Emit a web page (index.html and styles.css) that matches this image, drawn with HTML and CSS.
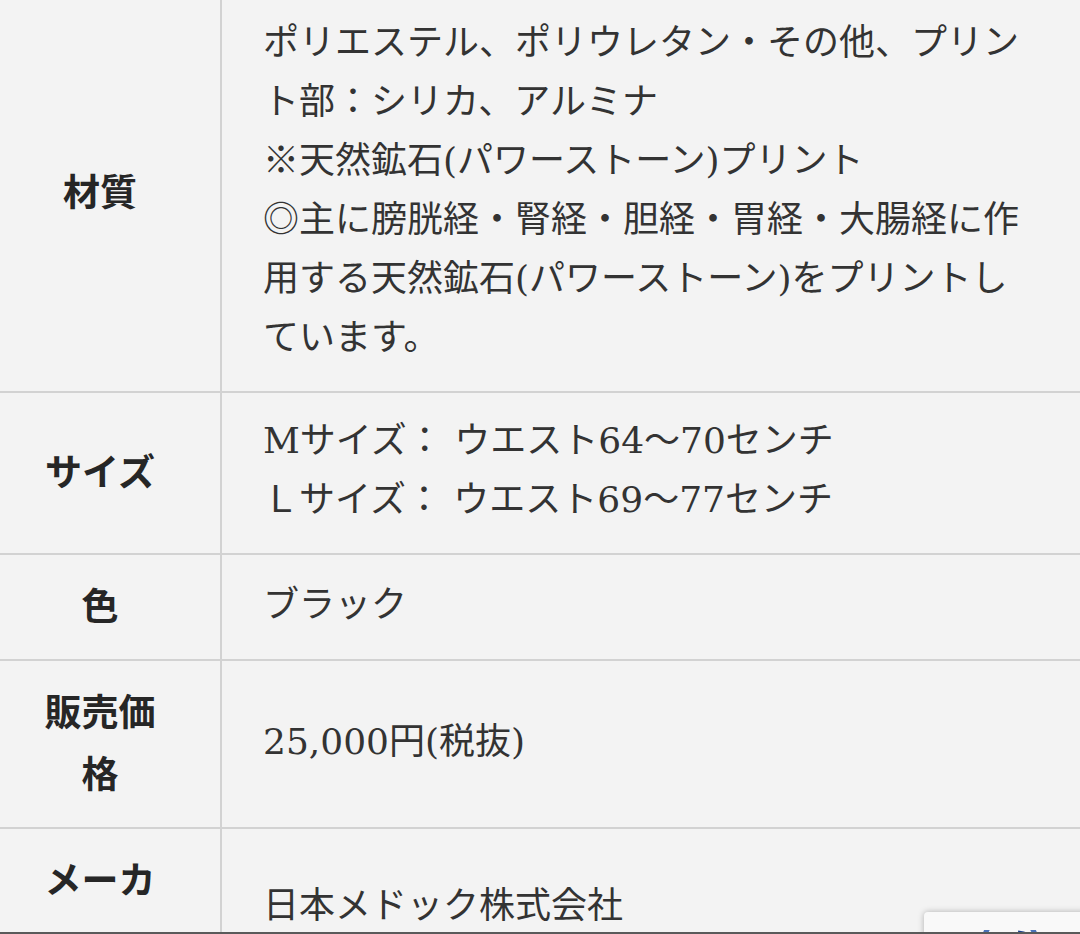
FILE: index.html
```html
<!DOCTYPE html>
<html lang="ja">
<head>
<meta charset="utf-8">
<title>商品仕様</title>
<link rel="stylesheet" href="styles.css">
</head>
<body>
<div class="spec">
  <div class="label">材質</div>
  <div class="value"><p class="text">ポリエステル、ポリウレタン・その他、プリント部：シリカ、アルミナ<br><span class="cjk">※</span>天然鉱石(パワーストーン)プリント<br><span class="cjk">◎</span>主に膀胱経・腎経・胆経・胃経・大腸経に作用する天然鉱石(パワーストーン)をプリントしています。</p></div>

  <div class="label">サイズ</div>
  <div class="value"><p class="text">Mサイズ： ウエスト64～70センチ<br>Ｌサイズ： ウエスト69～77センチ</p></div>

  <div class="label">色</div>
  <div class="value"><p class="text">ブラック</p></div>

  <div class="label">販売価格</div>
  <div class="value"><p class="text">25,000円(税抜)</p></div>

  <div class="label label-top">メーカ</div>
  <div class="value value-low"><p class="text">日本メドック株式会社</p></div>
</div>

<div class="badge">
  <svg class="badge-logo" width="56" height="12" viewBox="0 0 56 12">
    <path d="M2 12 A26 26 0 0 1 54 12" fill="none" stroke="#4a72b8" stroke-width="5"/>
    <path d="M36 3 A26 26 0 0 1 54 12" fill="none" stroke="#1c3f8c" stroke-width="5"/>
  </svg>
</div>
<div class="edge"></div>
</body>
</html>
```
FILE: styles.css
```css
html, body {
  margin: 0;
  padding: 0;
  background: #f3f3f3;
}

body {
  color: #333;
  font-family: "DejaVu Serif", "Noto Sans CJK JP", serif;
  overflow: hidden;
  height: 934px;
}

.spec {
  display: grid;
  grid-template-columns: 222px 1fr;
  margin-top: -5px;
}

.label {
  display: flex;
  align-items: center;
  justify-content: center;
  text-align: center;
  padding: 18px 52px 24px 32px;
  border-right: 2px solid #d2d2d2;
  border-bottom: 2px solid #d2d2d2;
  font-family: "Noto Sans CJK JP", sans-serif;
  font-size: 37px;
  line-height: 62px;
  font-weight: 700;
  color: #262626;
}

.value {
  display: flex;
  align-items: center;
  padding: 18px 49px 24px 41px;
  border-bottom: 2px solid #d2d2d2;
  font-size: 36px;
  line-height: 59px;
  color: #333;
}

.text {
  margin: 0;
  flex: 1;
}

.cjk {
  font-family: "Noto Sans CJK JP", sans-serif;
  line-height: 1;
}

.label-top {
  align-items: flex-start;
}

.value-low {
  align-items: flex-start;
  padding-top: 47px;
}

.badge {
  position: fixed;
  left: 924px;
  top: 912px;
  width: 256px;
  height: 60px;
  background: #f9f9f9;
  border-radius: 4px;
  box-shadow: 0 0 6px rgba(0, 0, 0, 0.28);
}

.badge-logo {
  position: absolute;
  left: 58px;
  top: 18px;
}

.edge {
  position: fixed;
  left: 0;
  right: 0;
  bottom: 0;
  height: 2px;
  background: #5a5a5a;
}
```
